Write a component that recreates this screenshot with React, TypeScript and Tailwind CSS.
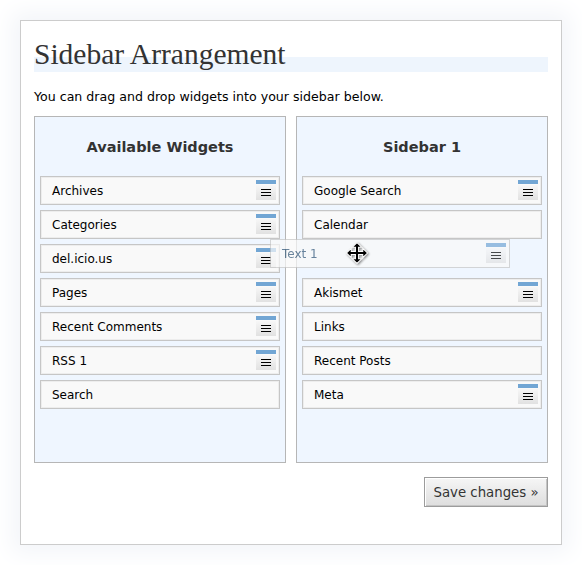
import React from "react";

type Widget = { name: string; handle?: boolean };

const available: Widget[] = [
  { name: "Archives", handle: true },
  { name: "Categories", handle: true },
  { name: "del.icio.us", handle: true },
  { name: "Pages", handle: true },
  { name: "Recent Comments", handle: true },
  { name: "RSS 1", handle: true },
  { name: "Search" },
];

const sidebar: (Widget | null)[] = [
  { name: "Google Search", handle: true },
  { name: "Calendar" },
  null,
  { name: "Akismet", handle: true },
  { name: "Links" },
  { name: "Recent Posts" },
  { name: "Meta", handle: true },
];

function Handle() {
  return (
    <div className="mt-[3px] mr-[3px] flex w-[20px] flex-col gap-[1px]">
      <div className="h-[4px] bg-[#72a6d4]" />
      <div className="flex h-[15px] items-center justify-center bg-gradient-to-b from-[#f7f7f7] to-[#e1e1e1]">
        <svg width="10" height="7" viewBox="0 0 10 7">
          <path d="M0 0.5H10M0 3.5H10M0 6.5H10" stroke="#000" strokeWidth="1" />
        </svg>
      </div>
    </div>
  );
}

function Item({ w }: { w: Widget }) {
  return (
    <div className="flex h-[29px] justify-between border border-[#c6c6c6] bg-[#f9f9f9] shadow-[inset_0_0_0_1px_#ededed]">
      <span className="self-center pl-[11px] text-[12px] text-black">{w.name}</span>
      {w.handle && <Handle />}
    </div>
  );
}

function Column({ title, items }: { title: string; items: (Widget | null)[] }) {
  return (
    <div className="h-[347px] w-[252px] border border-[#b6b6b6] bg-[#eff6ff] px-[5px]">
      <div className="flex h-[59px] items-center justify-center pt-[2px] text-[14.5px] font-bold text-[#333]">
        {title}
      </div>
      <div className="flex flex-col gap-[5px]">
        {items.map((w, i) => (w ? <Item key={i} w={w} /> : <div key={i} className="h-[29px]" />))}
      </div>
    </div>
  );
}

export default function App() {
  return (
    <div className="relative h-[565px] w-[582px] overflow-hidden bg-white pt-[20px] pl-[20px] font-['DejaVu_Sans',sans-serif]">
      <div className="h-[525px] w-[542px] border border-[#cccccc] bg-white px-[13px] pt-[17px] shadow-[0_0_22px_8px_#f3f5f9]">
        <h2 className="h-[34px] bg-[linear-gradient(to_bottom,transparent_19px,#eef5fd_19px)] font-['Liberation_Serif',serif] text-[29.5px] leading-[32px] text-[#333]">
          Sidebar Arrangement
        </h2>
        <p className="mt-[17px] text-[12.6px] leading-[15px] text-black">
          You can drag and drop widgets into your sidebar below.
        </p>
        <div className="mt-[12px] flex gap-[10px]">
          <Column title="Available Widgets" items={available} />
          <Column title="Sidebar 1" items={sidebar} />
        </div>
        <div className="mt-[14px] flex justify-end">
          <button className="h-[30px] w-[124px] border border-[#9c9c9c] bg-gradient-to-b from-[#f6f6f6] to-[#dedede] pt-[2px] text-[13.3px] text-[#333] shadow-[inset_1px_1px_0_#fff,inset_-1px_-1px_0_#c4c4c4]">
            Save changes »
          </button>
        </div>
      </div>

      {/* widget being dragged */}
      <div className="absolute left-[270px] top-[239px] flex h-[29px] w-[240px] justify-between border border-[#c6c6c6] bg-[#f9f9f9] opacity-70">
        <span className="self-center pl-[11px] text-[12px] text-[#2d5273]">Text 1</span>
        <Handle />
      </div>

      <svg
        className="absolute left-[346px] top-[242px] drop-shadow-[1px_1px_1px_rgba(0,0,0,0.45)]"
        width="22"
        height="22"
        viewBox="0 0 21 21"
      >
        <polygon
          points="10.5,0.5 15,5 12,5 12,9 16,9 16,6 20.5,10.5 16,15 16,12 12,12 12,16 15,16 10.5,20.5 6,16 9,16 9,12 5,12 5,15 0.5,10.5 5,6 5,9 9,9 9,5 6,5"
          fill="#000"
          stroke="#fff"
          strokeWidth="1"
        />
      </svg>
    </div>
  );
}
